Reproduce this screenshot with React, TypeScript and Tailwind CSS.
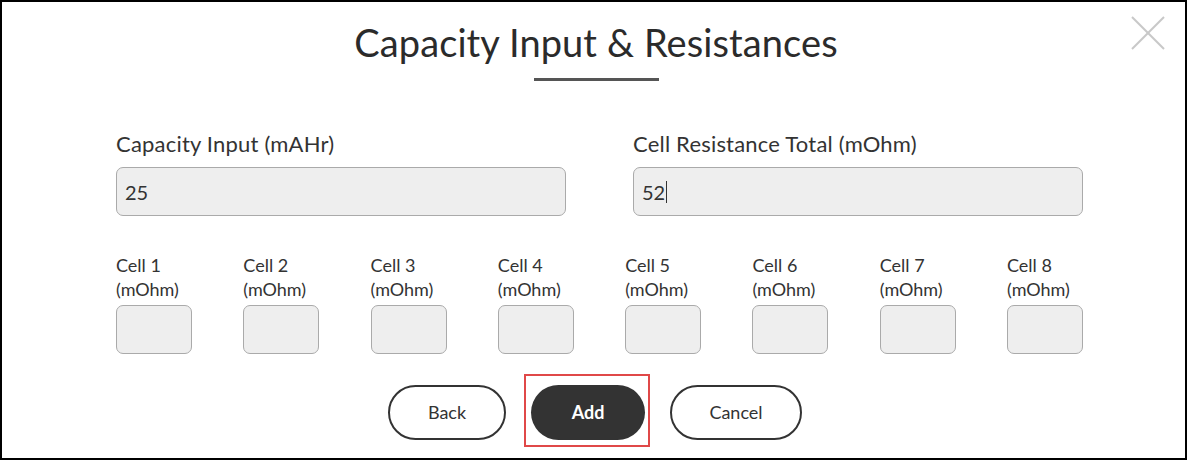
import React from "react";

const cells = [1, 2, 3, 4, 5, 6, 7, 8];

export default function App() {
  return (
    <div
      className="w-[1187px] h-[460px] border-2 border-black bg-white text-[#333] overflow-hidden relative"
      style={{ fontFamily: "Lato, 'Noto Sans', sans-serif" }}
    >
      <div className="absolute right-[20px] top-[14px] w-[34px] h-[34px]">
        <svg width="34" height="34" viewBox="0 0 34 34">
          <line x1="1" y1="1" x2="33" y2="33" stroke="#c8c8c8" strokeWidth="2" />
          <line x1="33" y1="1" x2="1" y2="33" stroke="#c8c8c8" strokeWidth="2" />
        </svg>
      </div>
      <div className="flex flex-col items-center pl-[5px] pt-[17px]">
        <h1 className="text-[38px] leading-[46px] font-normal text-[#2b2b2b] tracking-[0.1px]">
          Capacity Input &amp; Resistances
        </h1>
        <div className="mt-[13px] w-[125px] h-[3px] bg-[#555]" />
      </div>
      <div className="pl-[114px] mt-[50px] w-[1081px]">
        <div className="grid grid-cols-2 gap-x-[67px]">
          <div className="flex flex-col">
            <label className="text-[22px] leading-[26px] tracking-[0.2px]">Capacity Input (mAHr)</label>
            <div className="mt-[10px] h-[49px] rounded-[7px] border border-[#aaa] bg-[#eeeeee] flex items-center px-[8px] text-[20px]">
              25
            </div>
          </div>
          <div className="flex flex-col">
            <label className="text-[22px] leading-[26px] tracking-[0.2px]">Cell Resistance Total (mOhm)</label>
            <div className="mt-[10px] h-[49px] rounded-[7px] border border-[#aaa] bg-[#eeeeee] flex items-center px-[8px] text-[20px]">
              52<span className="inline-block w-[1px] h-[22px] bg-[#333] ml-[1px]" />
            </div>
          </div>
        </div>
        <div className="grid grid-cols-8 gap-x-[51.3px] mt-[37px]">
          {cells.map((n) => (
            <div key={n} className="flex flex-col">
              <div className="text-[18px] leading-[24px] whitespace-nowrap">
                Cell {n}
                <br />
                (mOhm)
              </div>
              <div className="mt-[4px] h-[49px] w-[76px] rounded-[7px] border border-[#aaa] bg-[#eeeeee]" />
            </div>
          ))}
        </div>
      </div>
      <div className="flex justify-center gap-[25px] mt-[31px] pl-[3px]">
        <button className="w-[118px] h-[55px] rounded-full border-2 border-[#333] bg-white text-[18px] text-[#333]">
          Back
        </button>
        <div className="relative">
          <button className="w-[114px] h-[55px] rounded-full bg-[#333] text-white text-[18px] font-bold">
            Add
          </button>
          <div className="absolute -left-[7px] -right-[5px] -top-[11px] -bottom-[7px] border-2 border-[#e04848]" />
        </div>
        <button className="w-[132px] h-[55px] rounded-full border-2 border-[#333] bg-white text-[18px] text-[#333]">
          Cancel
        </button>
      </div>
    </div>
  );
}
